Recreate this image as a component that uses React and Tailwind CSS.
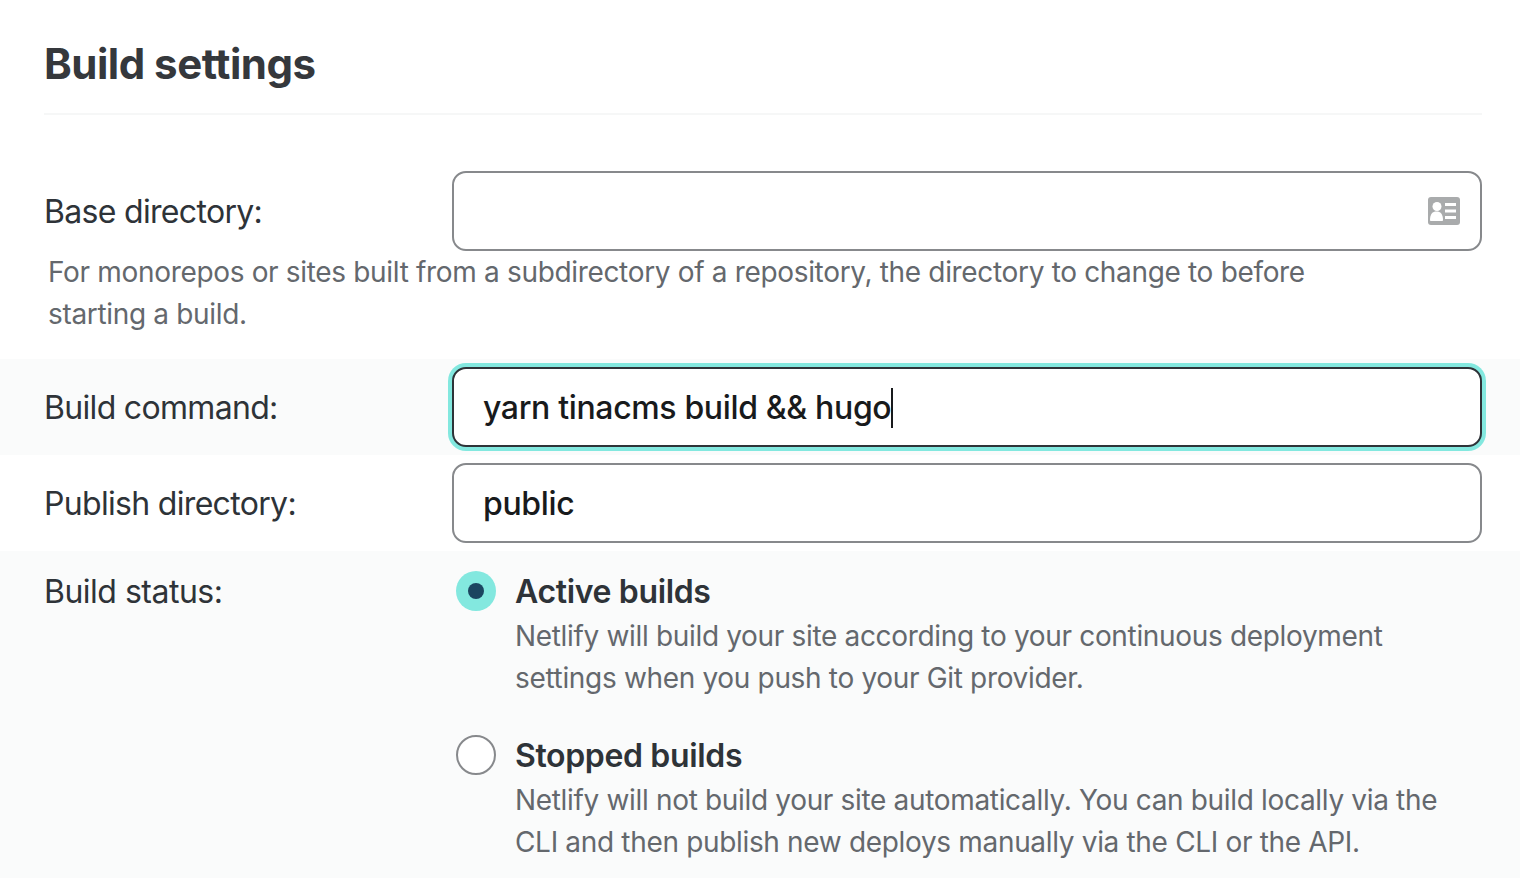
import React from 'react'

const font = { fontFamily: 'Inter, sans-serif' }

const CardIcon = () => (
  <svg width="32" height="28" viewBox="0 0 32 28" className="block">
    <rect width="32" height="28" rx="3" fill="#a9abac" />
    <circle cx="9" cy="9.500" r="4.500" fill="#fff" />
    <path d="M2 23c0-6 2.500-8.500 6.500-8.500S15 17 15 23c0 .8-.5 1-1 1H3c-.5 0-1-.2-1-1z" fill="#fff" />
    <rect x="17" y="6" width="11" height="3" fill="#fff" />
    <rect x="17" y="12.500" width="11" height="3" fill="#fff" />
    <rect x="17" y="19" width="11" height="3" fill="#fff" />
  </svg>
)

const Label = ({ children }) => (
  <div className="w-[408px] shrink-0 pt-[2px] text-[32px] tracking-[-0.68px] text-[#2e3338]">{children}</div>
)

const Row = ({ label, className = '', children }) => (
  <div className={`flex items-center h-24 pl-11 pr-[38px] ${className}`}>
    <Label>{label}</Label>
    {children}
  </div>
)

const Radio = ({ checked, title, children }) => (
  <div className="flex">
    <div className="ml-1 w-[59px] shrink-0 pt-[20px]">
      {checked ? (
        <div className="w-10 h-10 rounded-full bg-[#83e8df] flex items-center justify-center">
          <div className="w-4 h-4 rounded-full bg-[#1b4560]" />
        </div>
      ) : (
        <div className="w-10 h-10 rounded-full bg-white border-2 border-[#87898c]" />
      )}
    </div>
    <div>
      <div className="text-[32px] leading-[48px] font-semibold tracking-[-0.35px] text-[#2e3338] pt-[17px]">{title}</div>
      <p className="text-[28px] leading-[42px] tracking-[-0.33px] text-[#64686d] mt-[-1px]">{children}</p>
    </div>
  </div>
)

export default function App() {
  return (
    <div className="w-[1520px] h-[888px] bg-white overflow-hidden" style={font}>
      <div className="ml-11 mr-[38px] pt-[34px] h-[115px] border-b-2 border-[#f6f7f7]">
        <h2 className="text-[42px] leading-[60px] font-bold text-[#35383c] tracking-[-0.5px]">Build settings</h2>
      </div>

      <div className="flex items-center pl-11 pr-[38px] mt-[56px]">
        <Label>Base directory:</Label>
        <div className="flex-1 h-20 rounded-[14px] border-2 border-[#87898c] flex items-center justify-end pr-5">
          <CardIcon />
        </div>
      </div>
      <p className="pl-12 pr-[150px] pb-[24px] text-[28px] leading-[42px] tracking-[-0.33px] text-[#64686d]">
        For monorepos or sites built from a subdirectory of a repository, the directory to change to before starting a build.
      </p>

      <Row label="Build command:" className="bg-[#fafbfb]">
        <div className="flex-1 h-20 rounded-[14px] border-2 border-[#2e3338] ring-4 ring-[#83e8df] flex items-center pl-[29px] pt-[2px] bg-white text-[32px] font-medium tracking-[-0.35px] text-[#181a1c]">
          yarn tinacms build &amp;&amp; hugo
          <span className="w-[2px] h-10 bg-[#181a1c]" />
        </div>
      </Row>
      <Row label="Publish directory:">
        <div className="flex-1 h-20 rounded-[14px] border-2 border-[#87898c] flex items-center pl-[29px] pt-[2px] bg-white text-[32px] font-medium tracking-[-0.35px] text-[#181a1c]">
          public
        </div>
      </Row>

      <div className="flex bg-[#fafbfb] pl-11 pr-[38px] h-[327px]">
        <div className="w-[408px] shrink-0 text-[32px] leading-[48px] tracking-[-0.5px] text-[#2e3338] pt-[17px]">Build status:</div>
        <div className="flex-1 flex flex-col gap-4">
          <Radio checked title="Active builds">
            Netlify will build your site according to your continuous deployment settings when you push to your Git provider.
          </Radio>
          <Radio title="Stopped builds">
            Netlify will not build your site automatically. You can build locally via the CLI and then publish new deploys manually via the CLI or the API.
          </Radio>
        </div>
      </div>
    </div>
  )
}
